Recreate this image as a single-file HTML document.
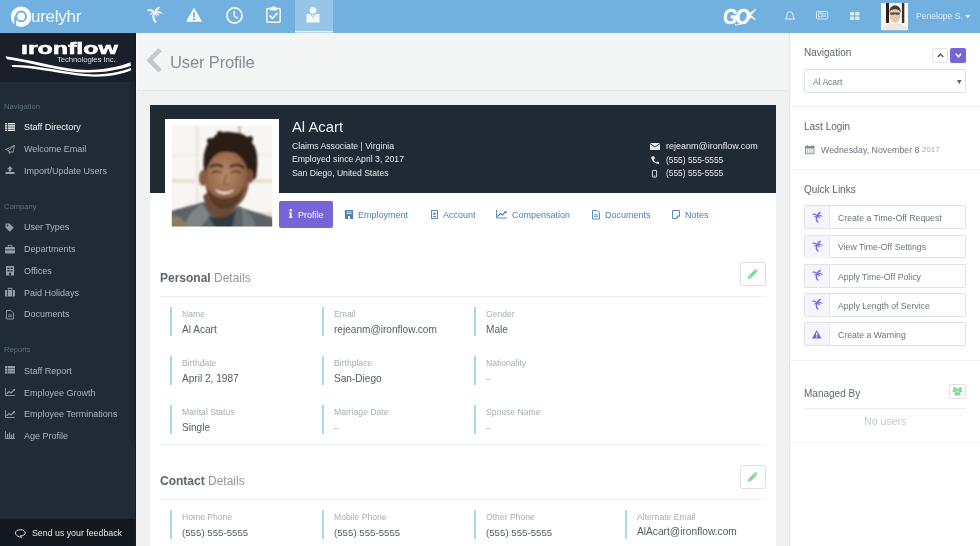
<!DOCTYPE html>
<html><head><meta charset="utf-8">
<style>
*{box-sizing:border-box;margin:0;padding:0}
html,body{width:980px;height:546px;overflow:hidden;background:#eff1f3;font-family:"Liberation Sans",sans-serif}
.abs{position:absolute}
svg.abs{overflow:visible}
.t{position:absolute;white-space:nowrap;line-height:1;will-change:transform}
</style></head><body>

<div class="abs" style="left:0px;top:0px;width:980px;height:33px;background:#72b0df;"></div>
<div class="abs" style="left:295px;top:0px;width:38px;height:33px;background:#96c5e8;"></div>
<div class="abs" style="left:295px;top:30.8px;width:38px;height:1.6px;background:#e9f2f8;"></div>
<div class="abs" style="left:295px;top:32.4px;width:38px;height:0.8px;background:#bcd7ea;"></div>
<div class="abs" style="left:0px;top:33px;width:136px;height:513px;background:#212b35;"></div>
<div class="abs" style="left:0px;top:33px;width:136px;height:48.5px;background:#1a2029;"></div>
<div class="abs" style="left:0px;top:519px;width:136px;height:27px;background:#13181e;"></div>
<div class="abs" style="left:130px;top:81.5px;width:5px;height:363px;background:#1e272f;"></div>
<div class="abs" style="left:135px;top:33px;width:1px;height:513px;background:#161d24;"></div>
<div class="abs" style="left:136px;top:33px;width:654px;height:513px;background:#eff1f3;"></div>
<div class="abs" style="left:136px;top:33px;width:654px;height:58px;background:#f4f6f6;border-bottom:1px solid #e4e7e9"></div>
<div class="abs" style="left:136px;top:33px;width:1px;height:58px;background:#fbfcfc;"></div>
<div class="abs" style="left:150px;top:105px;width:626px;height:441px;background:#fff;"></div>
<div class="abs" style="left:150px;top:105px;width:626px;height:88px;background:#1f2a35;"></div>
<div class="abs" style="left:789px;top:33px;width:191px;height:513px;background:#fff;border-left:1px solid #e2e5e8"></div>
<svg class="abs" style="left:0px;top:0px;" width="34" height="33" viewBox="0 0 34 33"><circle cx="21.1" cy="16.85" r="10.25" fill="#fff"/><circle cx="21.1" cy="16.4" r="4.9" stroke="#72b0df" stroke-width="2" fill="none"/><path d="M15.2 16.4 L15.2 27.5" stroke="#72b0df" stroke-width="2"/></svg>
<div class="t" style="left:31.3px;top:8.05px;font-size:17px;color:#f3f8fc;font-weight:400;letter-spacing:-0.25px">urelyhr</div>
<svg class="abs" style="left:144px;top:4px;" width="22" height="22" viewBox="0 0 22 22"><path d="M10.5 8.5 C 9 11, 8.6 14.5, 11.5 17.8" stroke="#f4f8fb" stroke-width="1.9" fill="none" stroke-linecap="round"/><g fill="#f4f8fb" stroke="#f4f8fb" stroke-width="0.5" stroke-linejoin="round"><path d="M10.5 7.8 C 8.5 5, 5 4.8, 3 6.4 C 5.5 6.4, 7.5 7.5, 10.5 7.8Z"/><path d="M10.5 7.8 C 11 4.8, 13.5 2.8, 16 3.2 C 15 5, 13 7, 10.5 7.8Z"/><path d="M10.5 7.8 C 13.5 6.5, 17 7.5, 18.5 9.6 C 16 8.8, 13 8.5, 10.5 8.2Z"/><path d="M10.3 8 C 8 8.5, 6.2 9.5, 6 11 C 7.5 10, 9 9, 10.5 8.3Z"/><path d="M10.5 8 C 12 9, 12.8 11, 12.8 12.6 C 11.8 11.5, 11 10, 10.5 8.3Z"/><path d="M10.8 8 C 13 8.5, 15 10, 15 11.8 C 14 10.5, 12.5 9.3, 10.8 8.3Z"/></g></svg>
<svg class="abs" style="left:186px;top:8px;" width="16" height="14" viewBox="0 0 16 14"><path d="M8 0.8 L15.2 13.2 L0.8 13.2 Z" fill="#f4f8fb" stroke="#f4f8fb" stroke-width="1.2" stroke-linejoin="round"/><path d="M6.9 4.5 L9.1 4.5 L8.8 9.3 L7.2 9.3 Z" fill="#72b0df"/><rect x="6.95" y="10.2" width="2.1" height="2" rx="0.5" fill="#72b0df"/></svg>
<svg class="abs" style="left:226px;top:7px;" width="17" height="17" viewBox="0 0 17 17"><circle cx="8.5" cy="8.5" r="7.6" fill="none" stroke="#f4f8fb" stroke-width="1.7"/><path d="M8.3 4 L8.3 9 L11.8 11.3" fill="none" stroke="#f4f8fb" stroke-width="1.4"/></svg>
<svg class="abs" style="left:266px;top:6px;" width="15" height="17" viewBox="0 0 15 17"><rect x="0.8" y="2.5" width="13.4" height="13.8" rx="1" fill="none" stroke="#f4f8fb" stroke-width="1.5"/><rect x="4" y="1.5" width="7" height="3" fill="#f4f8fb"/><circle cx="7.5" cy="1.2" r="1.2" fill="#f4f8fb"/><path d="M3.5 9.5 L6.5 12.3 L11.5 7" fill="none" stroke="#f4f8fb" stroke-width="1.8"/></svg>
<svg class="abs" style="left:306px;top:6px;" width="14" height="17" viewBox="0 0 14 17"><circle cx="7" cy="4.3" r="3.4" fill="#f4f8fb"/><path d="M0.5 8 L4.5 8 L7 13 L9.5 8 L13.5 8 L13.5 16.5 L0.5 16.5 Z" fill="#f4f8fb"/><path d="M6.3 8.5 L7.7 8.5 L7.4 12 L6.6 12Z" fill="#f4f8fb"/></svg>
<div class="t" style="left:722.8px;top:6.30px;font-size:22px;color:#fff;font-weight:700;font-style:italic;letter-spacing:-2.2px;transform:scaleX(0.84);transform-origin:0 0;-webkit-text-stroke:0.6px #fff">GO</div>
<svg class="abs" style="left:720px;top:4px;" width="40" height="26" viewBox="0 0 40 26"><path d="M35.8 4.8 L36.2 5.6 L31 11.2 L35.9 15.2 L35.3 16 L28 12 L27 11 Z" fill="#fff"/><path d="M15 20.8 C 21 21.2, 27 18.5, 30.5 13.5" stroke="#fff" stroke-width="0.9" fill="none"/></svg>
<svg class="abs" style="left:785px;top:10.5px;" width="10" height="10" viewBox="0 0 10 10"><path d="M5 0.8 C 2.3 0.8, 1.8 3.5, 1.8 5.5 L 0.6 8 L 9.4 8 L 8.2 5.5 C 8.2 3.5, 7.7 0.8, 5 0.8 Z" fill="none" stroke="#dbe9f5" stroke-width="1.1"/><path d="M3.8 8.5 Q5 10.5 6.2 8.5" fill="#dbe9f5"/></svg>
<svg class="abs" style="left:816px;top:11px;" width="12" height="8.5" viewBox="0 0 12 8.5"><rect x="0.5" y="0.5" width="11" height="7.5" rx="0.8" fill="none" stroke="#dbe9f5" stroke-width="1"/><rect x="2.5" y="2.2" width="3.5" height="3.6" fill="none" stroke="#dbe9f5" stroke-width="0.9"/><rect x="7" y="2.3" width="3" height="1" fill="#dbe9f5"/><rect x="7" y="4.6" width="3" height="1" fill="#dbe9f5"/></svg>
<svg class="abs" style="left:850px;top:11.5px;" width="9.5" height="8" viewBox="0 0 9.5 8"><rect x="0" y="0" width="4.2" height="3.5" rx="0.6" fill="#dbe9f5"/><rect x="5.2" y="0" width="4.2" height="3.5" rx="0.6" fill="#dbe9f5"/><rect x="0" y="4.5" width="4.2" height="3.5" rx="0.6" fill="#dbe9f5"/><rect x="5.2" y="4.5" width="4.2" height="3.5" rx="0.6" fill="#dbe9f5"/></svg>
<svg class="abs" style="left:881.3px;top:2.7px;" width="27.2" height="27.2" viewBox="0 0 27.2 27.2"><defs><filter id="ab" x="-10%" y="-10%" width="120%" height="120%"><feGaussianBlur stdDeviation="0.45"/></filter><clipPath id="ac"><rect width="27.2" height="27.2"/></clipPath></defs><g clip-path="url(#ac)"><rect width="27.2" height="27.2" fill="#faf8f4"/><g filter="url(#ab)"><rect x="5" y="-1" width="3" height="21" fill="#2b2219"/><rect x="20.9" y="-1" width="2.4" height="21" fill="#3a2f25"/><ellipse cx="14" cy="13" rx="5" ry="6.8" fill="#e2c6b0"/><path d="M8.5 10 C 8.3 4.5, 11 2.5, 14 2.5 C 17.5 2.5, 20 4.5, 19.6 10 C 18.5 7, 16.5 6.3, 14 6.3 C 11.5 6.3, 9.5 7, 8.5 10 Z" fill="#4a3a2e"/><path d="M9 9.6 L19 9.6 L18.6 11.8 L15 11.8 L14 10.8 L13 11.8 L9.4 11.8 Z" fill="#5a4a40"/><path d="M1 28 C 2 22, 8 20.5, 14 20.5 C 20 20.5, 26 22, 27 28 Z" fill="#efe7dc"/></g></g></svg>
<div class="t" style="left:915.8px;top:12.49px;font-size:8.6px;color:#dfeaf4;font-weight:400;">Penelope S.</div>
<svg class="abs" style="left:964.5px;top:14.5px;" width="5.5" height="3.2" viewBox="0 0 5.5 3.2"><path d="M0 0 L5.5 0 L2.75 3.2Z" fill="#dfeaf4"/></svg>
<div class="t" style="left:20.5px;top:40.08px;font-size:17.2px;color:#fff;font-weight:700;transform:scaleX(1.45);transform-origin:0 0;-webkit-text-stroke:0.6px #fff">ıronflow</div>
<div class="t" style="left:56.8px;top:55.57px;font-size:7.8px;color:#d9dde1;font-weight:400;letter-spacing:-0.1px">Technologies Inc.</div>
<svg class="abs" style="left:0px;top:0px;" width="136" height="81" viewBox="0 0 136 81"><path d="M5.5 56.3 C 30 59.5, 55 67.5, 78 69.6 C 100 71.3, 118 67, 130.5 62.3 L 131 65.8 C 118 70.5, 100 73.6, 78 72.2 C 55 70.2, 30 62.5, 7 59.3 Z" fill="#fff"/><path d="M11.5 65 C 30 64.2, 55 69.8, 78 73.3 C 100 76.2, 118 73, 131 67.8 L 131.2 70.3 C 118 75.8, 100 78.3, 78 75.6 C 55 72.5, 30 67.2, 12.3 67 Z" fill="#fff"/></svg>
<div class="t" style="left:4.4px;top:102.64px;font-size:7.6px;color:#5e6e7d;font-weight:400;">Navigation</div>
<div class="t" style="left:23.8px;top:123.05px;font-size:9px;color:#f2f4f6;font-weight:400;">Staff Directory</div>
<div class="t" style="left:23.8px;top:145.35px;font-size:9px;color:#aab5bf;font-weight:400;">Welcome Email</div>
<div class="t" style="left:23.8px;top:167.15px;font-size:9px;color:#aab5bf;font-weight:400;">Import/Update Users</div>
<div class="t" style="left:4.4px;top:202.74px;font-size:7.6px;color:#5e6e7d;font-weight:400;">Company</div>
<div class="t" style="left:23.8px;top:223.25px;font-size:9px;color:#aab5bf;font-weight:400;">User Types</div>
<div class="t" style="left:23.8px;top:245.05px;font-size:9px;color:#aab5bf;font-weight:400;">Departments</div>
<div class="t" style="left:23.8px;top:266.85px;font-size:9px;color:#aab5bf;font-weight:400;">Offices</div>
<div class="t" style="left:23.8px;top:288.65px;font-size:9px;color:#aab5bf;font-weight:400;">Paid Holidays</div>
<div class="t" style="left:23.8px;top:310.45px;font-size:9px;color:#aab5bf;font-weight:400;">Documents</div>
<div class="t" style="left:4.4px;top:346.14px;font-size:7.6px;color:#5e6e7d;font-weight:400;">Reports</div>
<div class="t" style="left:23.8px;top:366.85px;font-size:9px;color:#aab5bf;font-weight:400;">Staff Report</div>
<div class="t" style="left:23.8px;top:388.65px;font-size:9px;color:#aab5bf;font-weight:400;">Employee Growth</div>
<div class="t" style="left:23.8px;top:410.45px;font-size:9px;color:#aab5bf;font-weight:400;">Employee Terminations</div>
<div class="t" style="left:23.8px;top:432.25px;font-size:9px;color:#aab5bf;font-weight:400;">Age Profile</div>
<div class="t" style="left:31.7px;top:528.92px;font-size:8.8px;color:#e3e6e9;font-weight:400;">Send us your feedback</div>
<svg class="abs" style="left:14.5px;top:529px;" width="11" height="8.5" viewBox="0 0 11 8.5"><path d="M5.3 0.7 C 8.3 0.7, 10.2 2.2, 10.2 3.9 C 10.2 5.6, 8.3 7, 5.3 7 L 6.5 8.2 C 3.5 8, 1.6 6.8, 0.9 5.5 C 0.5 4.9, 0.5 4.4, 0.5 3.9 C 0.5 2.2, 2.3 0.7, 5.3 0.7 Z" fill="none" stroke="#dfe3e7" stroke-width="1"/></svg>
<svg class="abs" style="left:5px;top:122.5px;" width="10" height="8" viewBox="0 0 10 8"><g fill="#f2f4f6"><rect x="0" y="0" width="2" height="1.4"/><rect x="2.8" y="0" width="7.2" height="1.4"/><rect x="0" y="2.2" width="2" height="1.4"/><rect x="2.8" y="2.2" width="7.2" height="1.4"/><rect x="0" y="4.4" width="2" height="1.4"/><rect x="2.8" y="4.4" width="7.2" height="1.4"/><rect x="0" y="6.6" width="2" height="1.4"/><rect x="2.8" y="6.6" width="7.2" height="1.4"/></g></svg>
<svg class="abs" style="left:5px;top:144.5px;" width="10" height="9" viewBox="0 0 10 9"><path d="M9.5 0.5 L0.5 4.5 L3.5 5.5 L4.5 8.5 L6 6.5 L8 7.5 Z M3.5 5.5 L9.5 0.5 M4.5 8.5 L4.8 6" fill="none" stroke="#939ea8" stroke-width="0.9"/></svg>
<svg class="abs" style="left:5px;top:166px;" width="10" height="8" viewBox="0 0 10 8"><path d="M5 0 L8 3.2 L6.2 3.2 L6.2 5.5 L3.8 5.5 L3.8 3.2 L2 3.2 Z" fill="#939ea8"/><rect x="0.5" y="6" width="9" height="2" fill="#939ea8"/></svg>
<svg class="abs" style="left:5px;top:222.5px;" width="9" height="8.5" viewBox="0 0 9 8.5"><path d="M0.5 0.5 L4.5 0.5 L8.8 4.8 L4.8 8.8 L0.5 4.5 Z" fill="#939ea8"/><circle cx="2.5" cy="2.5" r="0.9" fill="#212b35"/></svg>
<svg class="abs" style="left:5px;top:244.5px;" width="10" height="8.5" viewBox="0 0 10 8.5"><rect x="0" y="2" width="10" height="6.5" rx="0.8" fill="#939ea8"/><rect x="3.2" y="0.3" width="3.6" height="2.2" fill="none" stroke="#939ea8" stroke-width="0.9"/><rect x="0" y="4.5" width="10" height="0.8" fill="#212b35"/></svg>
<svg class="abs" style="left:5.5px;top:265.5px;" width="8" height="9.5" viewBox="0 0 8 9.5"><rect x="0" y="0" width="8" height="9.5" fill="#939ea8"/><g fill="#212b35"><rect x="1.5" y="1.5" width="2" height="1.5"/><rect x="4.5" y="1.5" width="2" height="1.5"/><rect x="1.5" y="4" width="2" height="1.5"/><rect x="4.5" y="4" width="2" height="1.5"/><rect x="3" y="6.8" width="2" height="2.7"/></g></svg>
<svg class="abs" style="left:5px;top:287.5px;" width="10" height="8.5" viewBox="0 0 10 8.5"><rect x="0" y="2" width="10" height="6.5" rx="0.8" fill="#939ea8"/><rect x="3.2" y="0.3" width="3.6" height="2.2" fill="none" stroke="#939ea8" stroke-width="0.9"/><rect x="2.2" y="2" width="0.8" height="6.5" fill="#212b35"/><rect x="7" y="2" width="0.8" height="6.5" fill="#212b35"/></svg>
<svg class="abs" style="left:6px;top:309.5px;" width="8" height="9.5" viewBox="0 0 8 9.5"><path d="M0.5 0.5 L5 0.5 L7.5 3 L7.5 9 L0.5 9 Z" fill="none" stroke="#939ea8" stroke-width="0.9"/><rect x="2" y="4.5" width="4" height="0.8" fill="#939ea8"/><rect x="2" y="6.3" width="4" height="0.8" fill="#939ea8"/></svg>
<svg class="abs" style="left:5px;top:365.9px;" width="10" height="7.5" viewBox="0 0 10 7.5"><rect x="0" y="0" width="10" height="7.5" fill="#939ea8"/><g fill="#212b35"><rect x="2" y="0" width="0.6" height="7.5"/><rect x="0" y="2.3" width="10" height="0.5"/><rect x="0" y="4.8" width="10" height="0.5"/></g></svg>
<svg class="abs" style="left:5px;top:387.9px;" width="10" height="8" viewBox="0 0 10 8"><path d="M0.5 0 L0.5 7.5 L10 7.5" fill="none" stroke="#939ea8" stroke-width="0.9"/><path d="M1.5 6 L4 3.5 L6 5 L9.5 1.5" fill="none" stroke="#939ea8" stroke-width="1.1"/><path d="M8 1 L10 1 L10 3Z" fill="#939ea8"/></svg>
<svg class="abs" style="left:5px;top:409.9px;" width="10" height="8" viewBox="0 0 10 8"><path d="M0.5 0 L0.5 7.5 L10 7.5" fill="none" stroke="#939ea8" stroke-width="0.9"/><path d="M1.5 6 L4 3.5 L6 5 L9.5 1.5" fill="none" stroke="#939ea8" stroke-width="1.1"/><path d="M8 1 L10 1 L10 3Z" fill="#939ea8"/></svg>
<svg class="abs" style="left:5px;top:431.4px;" width="10" height="8" viewBox="0 0 10 8"><path d="M0.5 0 L0.5 7.5 L10 7.5" fill="none" stroke="#939ea8" stroke-width="0.9"/><g fill="#939ea8"><rect x="2" y="3" width="1.2" height="4"/><rect x="4" y="1.5" width="1.2" height="5.5"/><rect x="6" y="3.5" width="1.2" height="3.5"/><rect x="8" y="2.2" width="1.2" height="4.8"/></g></svg>
<svg class="abs" style="left:146px;top:48px;" width="17" height="25" viewBox="0 0 17 25"><path d="M14.2 1.6 L3.6 12.2 L14.2 22.8" fill="none" stroke="#c5c9ce" stroke-width="4.6"/></svg>
<div class="t" style="left:169.9px;top:55.19px;font-size:16.6px;color:#868d94;font-weight:400;letter-spacing:-0.18px">User Profile</div>
<div class="abs" style="left:164.5px;top:119px;width:114.5px;height:109px;background:#fff;"></div>
<svg class="abs" style="left:170px;top:124px" width="104" height="104" viewBox="0 0 104 104">
<defs><clipPath id="pc"><rect x="1.8" y="1.7" width="100.4" height="100.8"/></clipPath>
<filter id="b1" x="-20%" y="-20%" width="140%" height="140%"><feGaussianBlur stdDeviation="1.2"/></filter>
<filter id="b2" x="-20%" y="-20%" width="140%" height="140%"><feGaussianBlur stdDeviation="0.9"/></filter>
<radialGradient id="fg" cx="0.45" cy="0.4" r="0.6"><stop offset="0" stop-color="#b88a68"/><stop offset="0.6" stop-color="#9c6c4e"/><stop offset="1" stop-color="#74503a"/></radialGradient></defs>
<g clip-path="url(#pc)">
<rect width="104" height="104" fill="#f8f6f2"/>
<g filter="url(#b1)">
<rect x="0" y="55" width="104" height="4" fill="#e8e0d5"/>
<rect x="0" y="30" width="104" height="2" fill="#f0ebe4"/>
<rect x="68" y="0" width="3" height="20" fill="#cfc4b8"/>
<rect x="25" y="0" width="4" height="104" fill="#f0ebe4"/>
<rect x="0" y="88" width="104" height="16" fill="#e8e1d6"/>
</g>
<g filter="url(#b2)">
<path d="M0 104 L0 88 C 8 84, 22 82, 33 78 L 60 86 L 66 82 C 78 86, 92 90, 104 94 L 104 104 Z" fill="#5b6468"/>
<path d="M14 104 C 16 94, 22 86, 32 80 L 40 92 L 30 104 Z" fill="#7d8585"/>
<path d="M66 80 C 72 84, 74 90, 72 104 L 86 104 C 84 94, 78 86, 66 80 Z" fill="#727a7c"/>
<path d="M0 104 L0 92 C 6 90, 14 94, 18 104 Z" fill="#8c7e5c"/>
<path d="M33 72 C 36 86, 44 94, 52 96 C 58 94, 64 88, 66 78 L 60 70 L 38 68 Z" fill="#6f4a36"/>
<path d="M38 92 L 46 104 L 62 104 L 66 86 C 60 92, 50 96, 38 92 Z" fill="#2f3a40"/>
<path d="M34 46 C 32 30, 36 18, 44 13 C 46 9, 52 9, 55 8 C 60 7, 64 9, 68 9 C 74 10, 80 14, 83 20 C 88 26, 88 40, 86 54 L 80 58 L 38 56 Z" fill="#2a1c15"/><circle cx="40" cy="17" r="3" fill="#2a1c15"/><circle cx="50" cy="10" r="3" fill="#2e1f17"/><circle cx="80" cy="15" r="3" fill="#2e1f17"/>
<ellipse cx="57" cy="56" rx="22" ry="29" fill="url(#fg)"/>
<path d="M34 40 C 36 30, 44 25, 56 24 C 68 24, 78 28, 80 40 C 76 32, 68 28, 56 28 C 46 28, 38 32, 34 40 Z" fill="#2a1c15"/>
<ellipse cx="33" cy="54" rx="4" ry="8" fill="#8a5c42"/>
<ellipse cx="80" cy="52" rx="3.5" ry="7" fill="#7a503a"/>
<path d="M36 62 C 38 76, 46 85, 55 85 C 64 85, 72 76, 75 62 C 70 70, 64 74, 55 74 C 46 74, 40 70, 36 62 Z" fill="#4c3020" opacity="0.75"/>
<path d="M40 43 C 45 40, 50 41, 53 43 M 60 43 C 64 40, 70 40, 74 44" stroke="#2a1a12" stroke-width="2.2" fill="none"/>
<path d="M42 49 C 45 47, 49 47, 52 49 M 61 49 C 64 47, 68 47, 71 49" stroke="#3a2418" stroke-width="1.5" fill="none"/>
<path d="M45 65 C 50 69, 60 69, 64 65 C 62 71, 48 72, 45 65 Z" fill="#f6f1ea"/>
<path d="M56 50 L 54 60 L 59 61" stroke="#7a4f38" stroke-width="1.2" fill="none"/>
</g></g>
</svg>
<div class="t" style="left:292.3px;top:120.02px;font-size:14.8px;color:#f0f2f4;font-weight:400;">Al Acart</div>
<div class="t" style="left:292.3px;top:141.80px;font-size:8.7px;color:#e6e9ec;font-weight:400;">Claims Associate | Virginia</div>
<div class="t" style="left:292.3px;top:155.40px;font-size:8.7px;color:#e6e9ec;font-weight:400;">Employed since April 3, 2017</div>
<div class="t" style="left:292.3px;top:168.79px;font-size:8.6px;color:#e6e9ec;font-weight:400;">San Diego, United States</div>
<svg class="abs" style="left:649.5px;top:142.5px;" width="10" height="7" viewBox="0 0 10 7"><rect x="0" y="0" width="10" height="7" rx="0.6" fill="#e6e9ec"/><path d="M0 0.5 L5 4 L10 0.5" stroke="#1f2a35" stroke-width="0.9" fill="none"/></svg>
<svg class="abs" style="left:650.5px;top:155.5px;" width="8" height="8" viewBox="0 0 8 8"><path d="M1.5 0.3 L3.3 0.3 L3.8 2.8 L2.6 3.6 C 3.3 5, 4.4 6, 5.4 6.6 L6.2 5.4 L8 6 L8 8 C 3.5 8, 0 4, 0.3 1 Z" fill="#e6e9ec"/></svg>
<svg class="abs" style="left:652px;top:169.5px;" width="5" height="7.5" viewBox="0 0 5 7.5"><rect x="0.4" y="0.4" width="4.2" height="6.7" rx="0.5" fill="none" stroke="#e6e9ec" stroke-width="0.9"/><rect x="1.8" y="5.5" width="1.4" height="0.9" fill="#e6e9ec"/></svg>
<div class="t" style="left:665.8px;top:142.35px;font-size:9px;color:#e6e9ec;font-weight:400;">rejeanm@ironflow.com</div>
<div class="t" style="left:665.8px;top:156.16px;font-size:8.4px;color:#e6e9ec;font-weight:400;">(555) 555-5555</div>
<div class="t" style="left:665.8px;top:169.46px;font-size:8.4px;color:#e6e9ec;font-weight:400;">(555) 555-5555</div>
<div class="abs" style="left:279px;top:201px;width:54.3px;height:27.2px;background:#7565d7;border-radius:2px"></div>
<svg class="abs" style="left:289px;top:208.5px;" width="3.5" height="9" viewBox="0 0 3.5 9"><circle cx="1.75" cy="1.2" r="1.2" fill="#fff"/><path d="M0 3.5 L2.7 3.5 L2.7 8 L3.5 8 L3.5 9 L0 9 L0 8 L0.8 8 L0.8 4.5 L0 4.5Z" fill="#fff"/></svg>
<div class="t" style="left:297.5px;top:211.15px;font-size:9px;color:#fff;font-weight:400;">Profile</div>
<svg class="abs" style="left:344.6px;top:209.6px;" width="8" height="9" viewBox="0 0 8 9"><rect x="0" y="0" width="8" height="9" fill="#4b7fb7"/><g fill="#fff"><rect x="1.5" y="1.5" width="5" height="0.8"/><rect x="1.5" y="3.2" width="5" height="0.8"/><rect x="3" y="6" width="2" height="3"/></g></svg>
<div class="t" style="left:358.1px;top:211.15px;font-size:9px;color:#4b7fb7;font-weight:400;">Employment</div>
<svg class="abs" style="left:430.8px;top:209.6px;" width="7" height="9" viewBox="0 0 7 9"><rect x="0.5" y="0.5" width="6" height="8" fill="none" stroke="#4b7fb7" stroke-width="0.9"/><circle cx="3.5" cy="3.8" r="1.2" fill="#4b7fb7"/><path d="M1.5 7 C 2 5.5, 5 5.5, 5.5 7Z" fill="#4b7fb7"/></svg>
<div class="t" style="left:442.6px;top:211.15px;font-size:9px;color:#4b7fb7;font-weight:400;">Account</div>
<svg class="abs" style="left:496px;top:209.5px;" width="11" height="8.5" viewBox="0 0 11 8.5"><path d="M0.5 0 L0.5 8 L11 8" fill="none" stroke="#4b7fb7" stroke-width="0.9"/><path d="M1.5 6.5 L4.5 3.5 L6.5 5 L10 1.5" fill="none" stroke="#4b7fb7" stroke-width="1.1"/><path d="M8.2 1 L10.5 1 L10.5 3.2Z" fill="#4b7fb7"/></svg>
<div class="t" style="left:511.8px;top:211.15px;font-size:9px;color:#4b7fb7;font-weight:400;">Compensation</div>
<svg class="abs" style="left:592px;top:209.5px;" width="8" height="9.5" viewBox="0 0 8 9.5"><path d="M0.5 0.5 L5 0.5 L7.5 3 L7.5 9 L0.5 9 Z" fill="none" stroke="#4b7fb7" stroke-width="0.9"/><rect x="2" y="4.5" width="4" height="0.8" fill="#4b7fb7"/><rect x="2" y="6.3" width="4" height="0.8" fill="#4b7fb7"/></svg>
<div class="t" style="left:604.8px;top:211.15px;font-size:9px;color:#4b7fb7;font-weight:400;">Documents</div>
<svg class="abs" style="left:672px;top:209.5px;" width="8" height="9" viewBox="0 0 8 9"><path d="M0.5 0.5 L7.5 0.5 L7.5 6 L5 8.5 L0.5 8.5 Z M5 8.5 L5 6 L7.5 6" fill="none" stroke="#4b7fb7" stroke-width="0.9"/></svg>
<div class="t" style="left:685.3px;top:211.15px;font-size:9px;color:#4b7fb7;font-weight:400;">Notes</div>
<div class="t" style="left:160.4px;top:272.10px;font-size:12px;color:#5b6670;font-weight:700;">Personal</div>
<div class="t" style="left:214.1px;top:272.10px;font-size:12px;color:#8f979e;font-weight:400;">Details</div>
<div class="abs" style="left:160px;top:296px;width:606px;height:1px;background:#edf0f1;"></div>
<div class="abs" style="left:740px;top:262.3px;width:26px;height:23.5px;background:#fff;border:1px solid #dde2e5;border-radius:2px"></div>
<svg class="abs" style="left:740px;top:262.3px;" width="26" height="23.5" viewBox="0 0 26 23.5"><path d="M9.3 15.4 L15.7 9" stroke="#84da98" stroke-width="3.3" stroke-linecap="round"/><path d="M14.1 8.2 L16.5 10.6" stroke="#fff" stroke-width="0.5"/><circle cx="9.6" cy="15.1" r="0.6" fill="#fff"/></svg>
<div class="abs" style="left:170.1px;top:307.0px;width:2px;height:28.5px;background:#a9d8f2;"></div>
<div class="t" style="left:182.1px;top:310.29px;font-size:8.6px;color:#a6aeb5;font-weight:400;">Name</div>
<div class="t" style="left:182.1px;top:324.81px;font-size:10.1px;color:#535d66;font-weight:400;">Al Acart</div>
<div class="abs" style="left:322px;top:307.0px;width:2px;height:28.5px;background:#a9d8f2;"></div>
<div class="t" style="left:334px;top:310.29px;font-size:8.6px;color:#a6aeb5;font-weight:400;">Email</div>
<div class="t" style="left:334px;top:324.81px;font-size:10.1px;color:#535d66;font-weight:400;">rejeanm@ironflow.com</div>
<div class="abs" style="left:473.8px;top:307.0px;width:2px;height:28.5px;background:#a9d8f2;"></div>
<div class="t" style="left:485.8px;top:310.29px;font-size:8.6px;color:#a6aeb5;font-weight:400;">Gender</div>
<div class="t" style="left:485.8px;top:324.81px;font-size:10.1px;color:#535d66;font-weight:400;">Male</div>
<div class="abs" style="left:170.1px;top:356.0px;width:2px;height:28.5px;background:#a9d8f2;"></div>
<div class="t" style="left:182.1px;top:359.29px;font-size:8.6px;color:#a6aeb5;font-weight:400;">Birthdate</div>
<div class="t" style="left:182.1px;top:373.81px;font-size:10.1px;color:#535d66;font-weight:400;">April 2, 1987</div>
<div class="abs" style="left:322px;top:356.0px;width:2px;height:28.5px;background:#a9d8f2;"></div>
<div class="t" style="left:334px;top:359.29px;font-size:8.6px;color:#a6aeb5;font-weight:400;">Birthplace</div>
<div class="t" style="left:334px;top:373.81px;font-size:10.1px;color:#535d66;font-weight:400;">San-Diego</div>
<div class="abs" style="left:473.8px;top:356.0px;width:2px;height:28.5px;background:#a9d8f2;"></div>
<div class="t" style="left:485.8px;top:359.29px;font-size:8.6px;color:#a6aeb5;font-weight:400;">Nationality</div>
<div class="t" style="left:485.8px;top:374.65px;font-size:9px;color:#aab1b7;font-weight:400;">&ndash;</div>
<div class="abs" style="left:170.1px;top:405.0px;width:2px;height:28.5px;background:#a9d8f2;"></div>
<div class="t" style="left:182.1px;top:408.29px;font-size:8.6px;color:#a6aeb5;font-weight:400;">Marital Status</div>
<div class="t" style="left:182.1px;top:422.81px;font-size:10.1px;color:#535d66;font-weight:400;">Single</div>
<div class="abs" style="left:322px;top:405.0px;width:2px;height:28.5px;background:#a9d8f2;"></div>
<div class="t" style="left:334px;top:408.29px;font-size:8.6px;color:#a6aeb5;font-weight:400;">Marriage Date</div>
<div class="t" style="left:334px;top:423.65px;font-size:9px;color:#aab1b7;font-weight:400;">&ndash;</div>
<div class="abs" style="left:473.8px;top:405.0px;width:2px;height:28.5px;background:#a9d8f2;"></div>
<div class="t" style="left:485.8px;top:408.29px;font-size:8.6px;color:#a6aeb5;font-weight:400;">Spouse Name</div>
<div class="t" style="left:485.8px;top:423.65px;font-size:9px;color:#aab1b7;font-weight:400;">&ndash;</div>
<div class="abs" style="left:160px;top:443.8px;width:606px;height:1px;background:#edf0f1;"></div>
<div class="t" style="left:160.4px;top:475.10px;font-size:12px;color:#5b6670;font-weight:700;">Contact</div>
<div class="t" style="left:208.4px;top:475.10px;font-size:12px;color:#8f979e;font-weight:400;">Details</div>
<div class="abs" style="left:160px;top:499px;width:606px;height:1px;background:#edf0f1;"></div>
<div class="abs" style="left:740px;top:465px;width:26px;height:23.5px;background:#fff;border:1px solid #dde2e5;border-radius:2px"></div>
<svg class="abs" style="left:740px;top:465px;" width="26" height="23.5" viewBox="0 0 26 23.5"><path d="M9.3 15.4 L15.7 9" stroke="#84da98" stroke-width="3.3" stroke-linecap="round"/><path d="M14.1 8.2 L16.5 10.6" stroke="#fff" stroke-width="0.5"/><circle cx="9.6" cy="15.1" r="0.6" fill="#fff"/></svg>
<div class="abs" style="left:170.3px;top:510.29999999999995px;width:2px;height:28.5px;background:#a9d8f2;"></div>
<div class="t" style="left:182.3px;top:512.69px;font-size:8.6px;color:#a6aeb5;font-weight:400;">Home Phone</div>
<div class="t" style="left:182.3px;top:527.55px;font-size:9.7px;color:#535d66;font-weight:400;">(555) 555-5555</div>
<div class="abs" style="left:322px;top:510.29999999999995px;width:2px;height:28.5px;background:#a9d8f2;"></div>
<div class="t" style="left:334px;top:512.69px;font-size:8.6px;color:#a6aeb5;font-weight:400;">Mobile Phone</div>
<div class="t" style="left:334px;top:527.55px;font-size:9.7px;color:#535d66;font-weight:400;">(555) 555-5555</div>
<div class="abs" style="left:473.8px;top:510.29999999999995px;width:2px;height:28.5px;background:#a9d8f2;"></div>
<div class="t" style="left:485.8px;top:512.69px;font-size:8.6px;color:#a6aeb5;font-weight:400;">Other Phone</div>
<div class="t" style="left:485.8px;top:527.55px;font-size:9.7px;color:#535d66;font-weight:400;">(555) 555-5555</div>
<div class="abs" style="left:625px;top:510.29999999999995px;width:2px;height:28.5px;background:#a9d8f2;"></div>
<div class="t" style="left:637px;top:512.69px;font-size:8.6px;color:#a6aeb5;font-weight:400;">Alternate Email</div>
<div class="t" style="left:637px;top:527.13px;font-size:10.2px;color:#535d66;font-weight:400;">AlAcart@ironflow.com</div>
<div class="t" style="left:804.3px;top:48.40px;font-size:10px;color:#5c666f;font-weight:400;">Navigation</div>
<div class="abs" style="left:932px;top:47.8px;width:16.2px;height:15px;background:#fff;border:1px solid #e3e6e9;border-radius:2px"></div>
<svg class="abs" style="left:936.5px;top:52.5px;" width="7" height="4.5" viewBox="0 0 7 4.5"><path d="M0.8 4 L3.5 1 L6.2 4" fill="none" stroke="#4f5962" stroke-width="1.5"/></svg>
<div class="abs" style="left:950px;top:47.8px;width:16.3px;height:15px;background:#7565d7;border-radius:2px"></div>
<svg class="abs" style="left:954.6px;top:53px;" width="7" height="4.5" viewBox="0 0 7 4.5"><path d="M0.8 0.8 L3.5 3.8 L6.2 0.8" fill="none" stroke="#fff" stroke-width="1.5"/></svg>
<div class="abs" style="left:803.8px;top:68.5px;width:162.5px;height:24.2px;background:#fff;border:1px solid #dde3e4;border-radius:2px"></div>
<div class="t" style="left:812.7px;top:77.78px;font-size:8.5px;color:#6e767d;font-weight:400;">Al Acart</div>
<svg class="abs" style="left:957.2px;top:79.6px;" width="4.6" height="4.2" viewBox="0 0 4.6 4.2"><path d="M0 0 L4.6 0 L2.3 4.2Z" fill="#5a636b"/></svg>
<div class="abs" style="left:790px;top:106px;width:190px;height:1px;background:#f0f2f3;"></div>
<div class="t" style="left:804.3px;top:121.90px;font-size:10px;color:#5c666f;font-weight:400;">Last Login</div>
<svg class="abs" style="left:805px;top:144.6px;" width="9.5" height="9" viewBox="0 0 9.5 9"><rect x="0.5" y="1.5" width="8.5" height="7.2" fill="none" stroke="#838b92" stroke-width="0.9"/><rect x="0.5" y="1.5" width="8.5" height="2" fill="#838b92"/><g fill="#838b92"><rect x="2" y="4.5" width="1.2" height="1"/><rect x="4.2" y="4.5" width="1.2" height="1"/><rect x="6.4" y="4.5" width="1.2" height="1"/><rect x="2" y="6.5" width="1.2" height="1"/><rect x="4.2" y="6.5" width="1.2" height="1"/><rect x="6.4" y="6.5" width="1.2" height="1"/><rect x="2" y="0" width="1" height="2"/><rect x="6.5" y="0" width="1" height="2"/></g></svg>
<div class="t" style="left:821.4px;top:145.62px;font-size:8.8px;color:#6b747c;font-weight:400;">Wednesday, November 8</div>
<div class="t" style="left:921.7px;top:146.38px;font-size:7.9px;color:#a2a9af;font-weight:400;">2017</div>
<div class="abs" style="left:790px;top:169.1px;width:190px;height:1px;background:#f0f2f3;"></div>
<div class="t" style="left:804.3px;top:185.10px;font-size:10px;color:#5c666f;font-weight:400;">Quick Links</div>
<div class="abs" style="left:804px;top:205.2px;width:162.3px;height:23.8px;background:#fff;border:1px solid #dfe3e6;border-radius:2px"></div>
<div class="abs" style="left:805px;top:206.2px;width:24.5px;height:22px;background:#f5f5fb;border-right:1px solid #e3e6ea"></div>
<svg class="abs" style="left:811.5px;top:211.5px;" width="11" height="11" viewBox="3 3 16 16"><path d="M10.5 8.5 C 9 11, 8.6 14.5, 11.5 17.8" stroke="#7565d7" stroke-width="1.9" fill="none" stroke-linecap="round"/><g fill="#7565d7" stroke="#7565d7" stroke-width="0.5" stroke-linejoin="round"><path d="M10.5 7.8 C 8.5 5, 5 4.8, 3 6.4 C 5.5 6.4, 7.5 7.5, 10.5 7.8Z"/><path d="M10.5 7.8 C 11 4.8, 13.5 2.8, 16 3.2 C 15 5, 13 7, 10.5 7.8Z"/><path d="M10.5 7.8 C 13.5 6.5, 17 7.5, 18.5 9.6 C 16 8.8, 13 8.5, 10.5 8.2Z"/><path d="M10.3 8 C 8 8.5, 6.2 9.5, 6 11 C 7.5 10, 9 9, 10.5 8.3Z"/><path d="M10.5 8 C 12 9, 12.8 11, 12.8 12.6 C 11.8 11.5, 11 10, 10.5 8.3Z"/><path d="M10.8 8 C 13 8.5, 15 10, 15 11.8 C 14 10.5, 12.5 9.3, 10.8 8.3Z"/></g></svg>
<div class="t" style="left:837.6px;top:213.90px;font-size:8.7px;color:#6b747c;font-weight:400;">Create a Time-Off Request</div>
<div class="abs" style="left:804px;top:234.5px;width:162.3px;height:23.8px;background:#fff;border:1px solid #dfe3e6;border-radius:2px"></div>
<div class="abs" style="left:805px;top:235.5px;width:24.5px;height:22px;background:#f5f5fb;border-right:1px solid #e3e6ea"></div>
<svg class="abs" style="left:811.5px;top:240.8px;" width="11" height="11" viewBox="3 3 16 16"><path d="M10.5 8.5 C 9 11, 8.6 14.5, 11.5 17.8" stroke="#7565d7" stroke-width="1.9" fill="none" stroke-linecap="round"/><g fill="#7565d7" stroke="#7565d7" stroke-width="0.5" stroke-linejoin="round"><path d="M10.5 7.8 C 8.5 5, 5 4.8, 3 6.4 C 5.5 6.4, 7.5 7.5, 10.5 7.8Z"/><path d="M10.5 7.8 C 11 4.8, 13.5 2.8, 16 3.2 C 15 5, 13 7, 10.5 7.8Z"/><path d="M10.5 7.8 C 13.5 6.5, 17 7.5, 18.5 9.6 C 16 8.8, 13 8.5, 10.5 8.2Z"/><path d="M10.3 8 C 8 8.5, 6.2 9.5, 6 11 C 7.5 10, 9 9, 10.5 8.3Z"/><path d="M10.5 8 C 12 9, 12.8 11, 12.8 12.6 C 11.8 11.5, 11 10, 10.5 8.3Z"/><path d="M10.8 8 C 13 8.5, 15 10, 15 11.8 C 14 10.5, 12.5 9.3, 10.8 8.3Z"/></g></svg>
<div class="t" style="left:837.6px;top:243.20px;font-size:8.7px;color:#6b747c;font-weight:400;">View Time-Off Settings</div>
<div class="abs" style="left:804px;top:263.8px;width:162.3px;height:23.8px;background:#fff;border:1px solid #dfe3e6;border-radius:2px"></div>
<div class="abs" style="left:805px;top:264.8px;width:24.5px;height:22px;background:#f5f5fb;border-right:1px solid #e3e6ea"></div>
<svg class="abs" style="left:811.5px;top:270.1px;" width="11" height="11" viewBox="3 3 16 16"><path d="M10.5 8.5 C 9 11, 8.6 14.5, 11.5 17.8" stroke="#7565d7" stroke-width="1.9" fill="none" stroke-linecap="round"/><g fill="#7565d7" stroke="#7565d7" stroke-width="0.5" stroke-linejoin="round"><path d="M10.5 7.8 C 8.5 5, 5 4.8, 3 6.4 C 5.5 6.4, 7.5 7.5, 10.5 7.8Z"/><path d="M10.5 7.8 C 11 4.8, 13.5 2.8, 16 3.2 C 15 5, 13 7, 10.5 7.8Z"/><path d="M10.5 7.8 C 13.5 6.5, 17 7.5, 18.5 9.6 C 16 8.8, 13 8.5, 10.5 8.2Z"/><path d="M10.3 8 C 8 8.5, 6.2 9.5, 6 11 C 7.5 10, 9 9, 10.5 8.3Z"/><path d="M10.5 8 C 12 9, 12.8 11, 12.8 12.6 C 11.8 11.5, 11 10, 10.5 8.3Z"/><path d="M10.8 8 C 13 8.5, 15 10, 15 11.8 C 14 10.5, 12.5 9.3, 10.8 8.3Z"/></g></svg>
<div class="t" style="left:837.6px;top:272.50px;font-size:8.7px;color:#6b747c;font-weight:400;">Apply Time-Off Policy</div>
<div class="abs" style="left:804px;top:293.1px;width:162.3px;height:23.8px;background:#fff;border:1px solid #dfe3e6;border-radius:2px"></div>
<div class="abs" style="left:805px;top:294.1px;width:24.5px;height:22px;background:#f5f5fb;border-right:1px solid #e3e6ea"></div>
<svg class="abs" style="left:811.5px;top:299.40000000000003px;" width="11" height="11" viewBox="3 3 16 16"><path d="M10.5 8.5 C 9 11, 8.6 14.5, 11.5 17.8" stroke="#7565d7" stroke-width="1.9" fill="none" stroke-linecap="round"/><g fill="#7565d7" stroke="#7565d7" stroke-width="0.5" stroke-linejoin="round"><path d="M10.5 7.8 C 8.5 5, 5 4.8, 3 6.4 C 5.5 6.4, 7.5 7.5, 10.5 7.8Z"/><path d="M10.5 7.8 C 11 4.8, 13.5 2.8, 16 3.2 C 15 5, 13 7, 10.5 7.8Z"/><path d="M10.5 7.8 C 13.5 6.5, 17 7.5, 18.5 9.6 C 16 8.8, 13 8.5, 10.5 8.2Z"/><path d="M10.3 8 C 8 8.5, 6.2 9.5, 6 11 C 7.5 10, 9 9, 10.5 8.3Z"/><path d="M10.5 8 C 12 9, 12.8 11, 12.8 12.6 C 11.8 11.5, 11 10, 10.5 8.3Z"/><path d="M10.8 8 C 13 8.5, 15 10, 15 11.8 C 14 10.5, 12.5 9.3, 10.8 8.3Z"/></g></svg>
<div class="t" style="left:837.6px;top:301.81px;font-size:8.7px;color:#6b747c;font-weight:400;">Apply Length of Service</div>
<div class="abs" style="left:804px;top:322.4px;width:162.3px;height:23.8px;background:#fff;border:1px solid #dfe3e6;border-radius:2px"></div>
<div class="abs" style="left:805px;top:323.4px;width:24.5px;height:22px;background:#f5f5fb;border-right:1px solid #e3e6ea"></div>
<svg class="abs" style="left:812px;top:329.9px;" width="9.5" height="8.5" viewBox="0 0 9.5 8.5"><path d="M4.75 0 L9.5 8.5 L0 8.5 Z" fill="#7565d7"/><rect x="4.1" y="2.6" width="1.3" height="3" fill="#f5f5fb"/><rect x="4.1" y="6.4" width="1.3" height="1.2" fill="#f5f5fb"/></svg>
<div class="t" style="left:837.6px;top:331.10px;font-size:8.7px;color:#6b747c;font-weight:400;">Create a Warning</div>
<div class="abs" style="left:790px;top:360.2px;width:190px;height:1px;background:#eef0f2;"></div>
<div class="t" style="left:804px;top:388.90px;font-size:10px;color:#5c666f;font-weight:400;">Managed By</div>
<div class="abs" style="left:949.3px;top:384.4px;width:16.8px;height:15px;background:#fff;border:1px solid #dfe3e6;border-radius:2px"></div>
<svg class="abs" style="left:949.3px;top:384.4px;" width="17" height="15" viewBox="0 0 17 15"><g fill="#7fd893"><circle cx="5.6" cy="4.4" r="1.5"/><circle cx="11.3" cy="4.4" r="1.5"/><circle cx="8.45" cy="5.9" r="1.7"/><rect x="3.6" y="6" width="3.6" height="2.3" rx="0.8"/><rect x="9.7" y="6" width="3.6" height="2.3" rx="0.8"/><rect x="5.5" y="8.2" width="6" height="3.3" rx="0.7"/></g></svg>
<div class="abs" style="left:804px;top:408.2px;width:162px;height:1px;background:#eceff1;"></div>
<div class="t" style="left:863.7px;top:416.39px;font-size:10.6px;color:#c3c9ce;font-weight:400;">No users</div>
<div class="abs" style="left:790px;top:442.3px;width:190px;height:1px;background:#f1f3f4;"></div>
</body></html>
